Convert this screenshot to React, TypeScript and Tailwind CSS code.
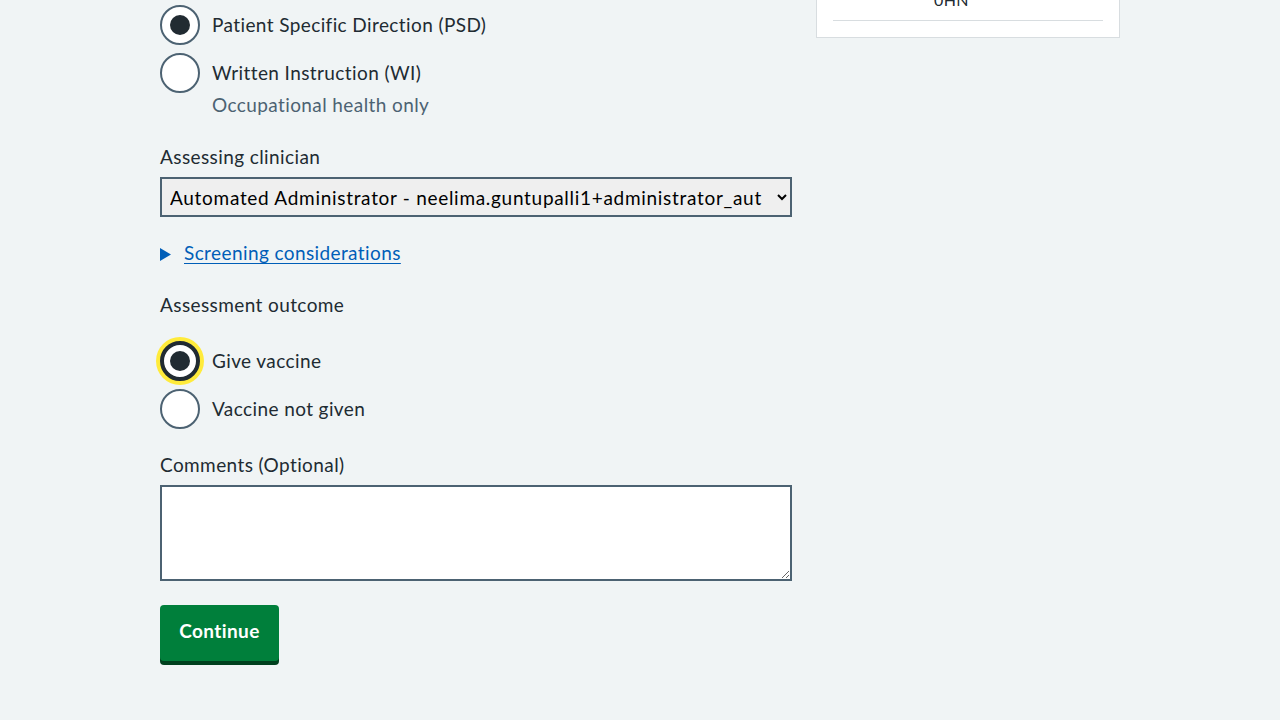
import React, { useState } from 'react';

const font = { fontFamily: 'Lato, "Liberation Sans", Arial, sans-serif', letterSpacing: '0.4px' };

interface RadioProps {
  label: string;
  checked?: boolean;
  focused?: boolean;
  hint?: string;
}

function Radio({ label, checked, focused, hint }: RadioProps) {
  return (
    <div className="flex items-start">
      <div
        className={
          focused
            ? 'w-10 h-10 shrink-0 rounded-full bg-white border-4 border-[#212b32] shadow-[0_0_0_4px_#ffeb3b] flex items-center justify-center'
            : 'w-10 h-10 shrink-0 rounded-full bg-white border-2 border-[#4c6272] flex items-center justify-center'
        }
      >
        {checked && <div className="w-5 h-5 rounded-full bg-[#212b32]" />}
      </div>
      <div className="pl-3 pt-[6px]">
        <div className="text-[19px] leading-[28px] text-[#212b32]">{label}</div>
        {hint && <div className="text-[19px] leading-[28px] text-[#4c6272] mt-[4px]">{hint}</div>}
      </div>
    </div>
  );
}

export default function App() {
  const [comment, setComment] = useState('');

  return (
    <div className="min-h-[720px] bg-[#f0f4f5]" style={font}>
      <div className="w-[960px] ml-[160px] flex gap-6 items-start">
        {/* Form column */}
        <div className="w-[632px] pt-[5px]">
          <div className="flex flex-col gap-2">
            <Radio label="Patient Specific Direction (PSD)" checked />
            <Radio label="Written Instruction (WI)" hint="Occupational health only" />
          </div>

          <label className="block mt-[24px] mb-[6px] text-[19px] leading-[28px] text-[#212b32]">
            Assessing clinician
          </label>
          <select
            className="w-full h-10 px-1 border-2 border-[#4c6272] bg-[#efefef] text-[19px] text-black"
            style={{ ...font, letterSpacing: '0.7px' }}
          >
            <option>Automated Administrator - neelima.guntupalli1+administrator_aut</option>
          </select>

          <div className="mt-[22px] flex items-center gap-[13px]">
            <svg width="11" height="13" viewBox="0 0 11 13" className="shrink-0 mt-[2px]">
              <path d="M0 0 L11 6.5 L0 13 Z" fill="#005eb8" />
            </svg>
            <a href="#" className="text-[19px] leading-[28px] text-[#005eb8] underline underline-offset-[3px]">
              Screening considerations
            </a>
          </div>

          <div className="mt-[24px] text-[19px] leading-[28px] text-[#212b32]">Assessment outcome</div>
          <div className="mt-[22px] flex flex-col gap-2">
            <Radio label="Give vaccine" checked focused />
            <Radio label="Vaccine not given" />
          </div>

          <label className="block mt-[22px] mb-[6px] text-[19px] leading-[28px] text-[#212b32]">
            Comments (Optional)
          </label>
          <textarea
            value={comment}
            onChange={e => setComment(e.target.value)}
            className="block w-full h-[96px] border-2 border-[#4c6272] bg-white p-2 text-[19px]"
          />

          <button className="mt-6 h-[56px] w-[119px] pb-1 rounded-[4px] bg-[#007f3b] text-white text-[19px] font-bold shadow-[0_4px_0_#00401e]">
            Continue
          </button>
        </div>

        {/* Side card */}
        <div className="w-[304px] -mt-[13px] bg-white border border-[#d8dde0] px-4 pb-4">
          <div className="h-6 pl-[101px] text-[16px] leading-6 text-[#212b32]">0HN</div>
          <hr className="mt-2 border-0 border-t border-[#d8dde0]" />
        </div>
      </div>
    </div>
  );
}
